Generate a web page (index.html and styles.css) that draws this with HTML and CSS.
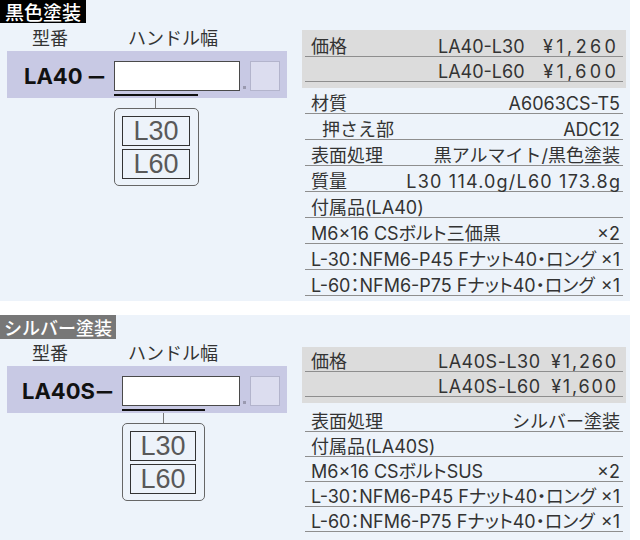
FILE: index.html
```html
<!DOCTYPE html>
<html lang="ja">
<head>
<meta charset="utf-8">
<title>LA40</title>
<link rel="stylesheet" href="styles.css">
</head>
<body>
<section class="sec sec-black">
  <div class="left">
    <div class="tag tag-black">黒色塗装</div>
    <div class="heads"><span>型番</span><span class="h-width">ハンドル幅</span></div>
    <div class="bar">
      <span class="model">LA40 <span class="dash">–</span></span>
      <div class="slot"><div class="field"></div><div class="uline"></div></div>
      <span class="dot"></span>
      <span class="sq"></span>
    </div>
    <div class="opts">
      <div class="stem"></div>
      <div class="optbox"><div class="opt">L30</div><div class="opt">L60</div></div>
    </div>
  </div>
  <div class="right">
    <div class="price">
      <div class="prow"><span>価格</span><span class="pm">LA40-L30</span><span class="pp">¥1,260</span></div>
      <div class="prow"><span></span><span class="pm">LA40-L60</span><span class="pp">¥1,600</span></div>
    </div>
    <div class="spec">
      <div class="row"><span>材質</span><span>A6063CS-T5</span></div>
      <div class="row indent"><span>押さえ部</span><span>ADC12</span></div>
      <div class="row"><span>表面処理</span><span>黒アルマイト/黒色塗装</span></div>
      <div class="row"><span>質量</span><span class="wide">L30 114.0g/L60 173.8g</span></div>
      <div class="row"><span>付属品(LA40)</span></div>
      <div class="row acc"><span>M6×16 CSボルト三価黒</span><span>×2</span></div>
      <div class="row acc"><span>L-30：NFM6-P45 Fナット40・ロング</span><span>×1</span></div>
      <div class="row acc"><span>L-60：NFM6-P75 Fナット40・ロング</span><span>×1</span></div>
    </div>
  </div>
</section>

<section class="sec sec-silver">
  <div class="left">
    <div class="tag tag-silver">シルバー塗装</div>
    <div class="heads"><span>型番</span><span class="h-width">ハンドル幅</span></div>
    <div class="bar">
      <span class="model">LA40S<span class="dash">–</span></span>
      <div class="slot"><div class="field"></div><div class="uline"></div></div>
      <span class="dot"></span>
      <span class="sq"></span>
    </div>
    <div class="opts">
      <div class="stem"></div>
      <div class="optbox"><div class="opt">L30</div><div class="opt">L60</div></div>
    </div>
  </div>
  <div class="right">
    <div class="price">
      <div class="prow"><span>価格</span><span class="pm">LA40S-L30</span><span class="pp">¥1,260</span></div>
      <div class="prow"><span></span><span class="pm">LA40S-L60</span><span class="pp">¥1,600</span></div>
    </div>
    <div class="spec">
      <div class="row"><span>表面処理</span><span>シルバー塗装</span></div>
      <div class="row"><span>付属品(LA40S)</span></div>
      <div class="row acc"><span>M6×16 CSボルトSUS</span><span>×2</span></div>
      <div class="row acc"><span>L-30：NFM6-P45 Fナット40・ロング</span><span>×1</span></div>
      <div class="row acc"><span>L-60：NFM6-P75 Fナット40・ロング</span><span>×1</span></div>
    </div>
  </div>
</section>
</body>
</html>
```

FILE: styles.css
```css
body {
  margin: 0;
  background: #ffffff;
  font-family: Inter, "Noto Sans CJK JP", sans-serif;
  color: #333333;
}

.sec {
  width: 630px;
  background: #edf3fa;
  display: flex;
}
.sec-black { height: 301px; }
.sec-silver { height: 225px; margin-top: 14px; }

.left {
  width: 302px;
  display: flex;
  flex-direction: column;
  align-items: flex-start;
}

.tag {
  height: 23px;
  line-height: 23px;
  padding: 0 5px;
  color: #ffffff;
  font-family: "Noto Sans CJK JP", sans-serif;
  font-size: 19px;
  font-weight: 500;
}
.tag-black { background: #000000; }
.tag-silver {
  background: #777777;
  height: 24px;
  line-height: 25px;
  padding: 0 4px;
  font-size: 18px;
}

.heads {
  height: 28px;
  line-height: 28px;
  padding-left: 32px;
  display: flex;
  font-family: "Noto Sans CJK JP", sans-serif;
  font-size: 18px;
  color: #333333;
}
.h-width { margin-left: 60px; }
.sec-silver .heads { height: 27px; line-height: 27px; }

.bar {
  margin-left: 7px;
  width: 280px;
  height: 47px;
  box-sizing: border-box;
  padding: 10px 0 0 17px;
  background: #c8c9e4;
  display: flex;
  align-items: flex-start;
}
.sec-silver .bar { padding-left: 15px; }

.model {
  width: 90px;
  height: 30px;
  line-height: 30px;
  font-family: Inter, sans-serif;
  font-weight: 700;
  font-size: 22px;
  color: #111111;
  white-space: nowrap;
}
.sec-silver .model { width: 100px; }
.dash {
  display: inline-block;
  transform: scaleX(1.4);
  margin-left: 3px;
}
.sec-silver .dash { margin-left: 4px; }

.slot { display: flex; flex-direction: column; }
.field {
  width: 126px;
  height: 30px;
  box-sizing: border-box;
  background: #ffffff;
  border: 1px solid #4a4a4a;
}
.sec-silver .field { width: 118px; }
.uline {
  margin-top: 3px;
  width: 84px;
  height: 2px;
  background: #111111;
}
.sec-silver .uline { width: 83px; }

.dot {
  width: 3px;
  height: 3px;
  margin: 25px 0 0 3px;
  background: #9a9ab0;
}
.sq {
  width: 30px;
  height: 30px;
  box-sizing: border-box;
  margin-left: 4px;
  background: #dcddef;
  border: 1px solid #b3b4cc;
}

.opts {
  margin-left: 114px;
  display: flex;
  flex-direction: column;
}
.sec-silver .opts { margin-left: 122px; }
.stem {
  width: 1px;
  height: 10px;
  margin-left: 41px;
  background: #777777;
}
.optbox {
  width: 85px;
  height: 78px;
  box-sizing: border-box;
  border: 1px solid #666666;
  border-radius: 5px;
  padding: 7px 8px 0 7px;
  display: flex;
  flex-direction: column;
  gap: 3px;
}
.sec-silver .optbox { width: 83px; }
.opt {
  height: 30px;
  box-sizing: border-box;
  border: 1px solid #333333;
  font-family: "Liberation Sans", sans-serif;
  font-size: 27px;
  line-height: 28px;
  color: #595959;
  text-align: center;
}

.right {
  width: 324px;
  padding-top: 30px;
}
.sec-silver .right { padding-top: 32px; }

.price {
  background: #dcdcdc;
  padding: 2px 3px 6px;
}
.sec-silver .price { padding-top: 0; }
.prow {
  display: grid;
  grid-template-columns: 127px 1fr auto;
  height: 25px;
  box-sizing: border-box;
  border-bottom: 1px solid #8e8e8e;
  padding: 4px 7px 0 6px;
  line-height: 21px;
  font-size: 18px;
  white-space: nowrap;
}
.pp {
  letter-spacing: 3.4px;
  margin-right: -3.4px;
}
.sec-silver .pm { letter-spacing: 0.5px; }
.sec-silver .pp {
  letter-spacing: 1.8px;
  margin-right: -1.8px;
}

.spec { margin: 0 3px; }
.sec-silver .spec { margin-top: 4px; }
.row {
  display: flex;
  justify-content: space-between;
  height: 26px;
  box-sizing: border-box;
  border-bottom: 1px solid #8e8e8e;
  padding: 5px 3px 0 6px;
  line-height: 21px;
  font-size: 18px;
  white-space: nowrap;
}
.sec-silver .row { height: 25px; padding-top: 4px; }
.row.indent { padding-left: 17px; }
.row.acc { font-feature-settings: "palt"; }
.wide {
  letter-spacing: 1.2px;
  margin-right: -1.2px;
}
```
